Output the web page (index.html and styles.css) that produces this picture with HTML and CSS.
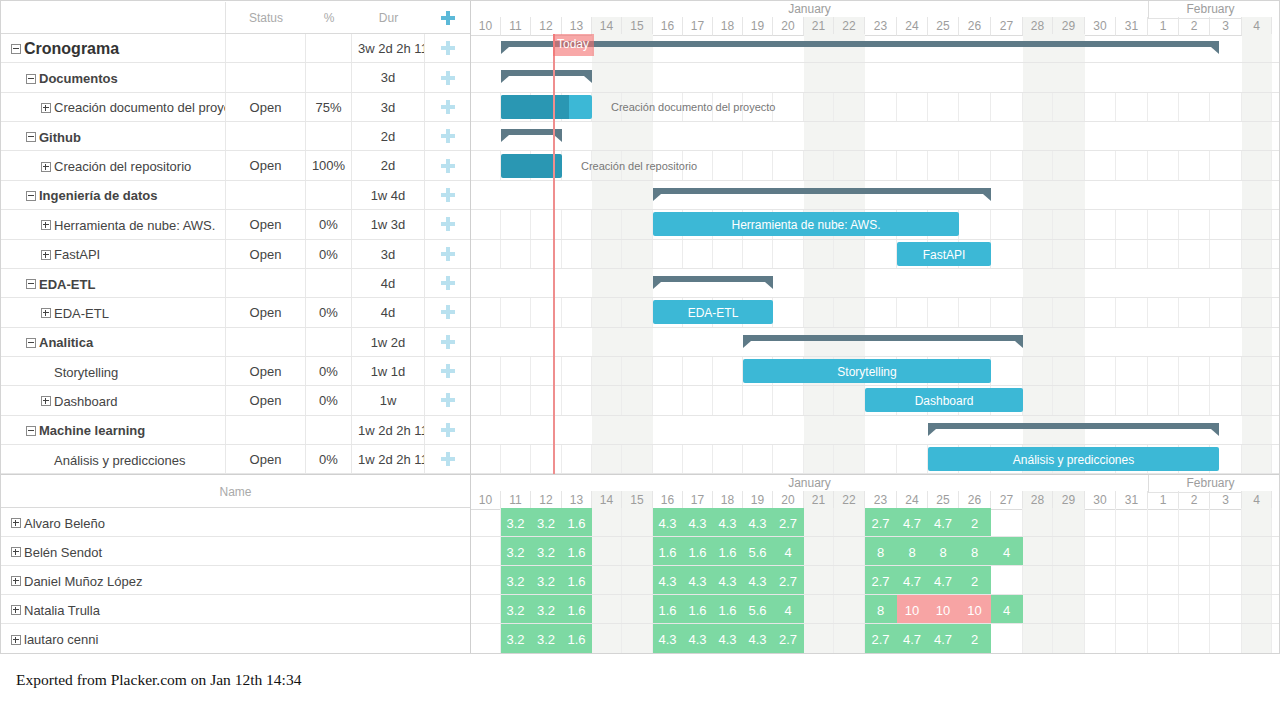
FILE: index.html
```html
<!DOCTYPE html>
<html lang="es">
<head>
  <meta charset="UTF-8">
  <meta name="viewport" content="width=device-width, initial-scale=1.0">
  <title>Cronograma - Placker</title>
  <link rel="stylesheet" href="styles.css">
</head>
<body>
  <div class="planner">
    <!-- Tareas -->
    <div class="section top">
      <div class="side">
        <div class="side-head">
          <div class="blank"></div>
          <div>Status</div>
          <div>%</div>
          <div>Dur</div>
          <div><span class="plus dark"></span></div>
        </div>

        <div class="row project">
          <div class="name"><span class="tog"></span>Cronograma</div>
          <div></div><div></div><div class="dur">3w 2d 2h 11m</div><div class="add"><span class="plus"></span></div>
        </div>
        <div class="row group">
          <div class="name"><span class="tog"></span>Documentos</div>
          <div></div><div></div><div class="dur">3d</div><div class="add"><span class="plus"></span></div>
        </div>
        <div class="row task">
          <div class="name"><span class="tog closed"></span>Creación documento del proyecto</div>
          <div>Open</div><div>75%</div><div class="dur">3d</div><div class="add"><span class="plus"></span></div>
        </div>
        <div class="row group">
          <div class="name"><span class="tog"></span>Github</div>
          <div></div><div></div><div class="dur">2d</div><div class="add"><span class="plus"></span></div>
        </div>
        <div class="row task">
          <div class="name"><span class="tog closed"></span>Creación del repositorio</div>
          <div>Open</div><div>100%</div><div class="dur">2d</div><div class="add"><span class="plus"></span></div>
        </div>
        <div class="row group">
          <div class="name"><span class="tog"></span>Ingeniería de datos</div>
          <div></div><div></div><div class="dur">1w 4d</div><div class="add"><span class="plus"></span></div>
        </div>
        <div class="row task">
          <div class="name"><span class="tog closed"></span>Herramienta de nube: AWS.</div>
          <div>Open</div><div>0%</div><div class="dur">1w 3d</div><div class="add"><span class="plus"></span></div>
        </div>
        <div class="row task">
          <div class="name"><span class="tog closed"></span>FastAPI</div>
          <div>Open</div><div>0%</div><div class="dur">3d</div><div class="add"><span class="plus"></span></div>
        </div>
        <div class="row group">
          <div class="name"><span class="tog"></span>EDA-ETL</div>
          <div></div><div></div><div class="dur">4d</div><div class="add"><span class="plus"></span></div>
        </div>
        <div class="row task">
          <div class="name"><span class="tog closed"></span>EDA-ETL</div>
          <div>Open</div><div>0%</div><div class="dur">4d</div><div class="add"><span class="plus"></span></div>
        </div>
        <div class="row group">
          <div class="name"><span class="tog"></span>Analitica</div>
          <div></div><div></div><div class="dur">1w 2d</div><div class="add"><span class="plus"></span></div>
        </div>
        <div class="row task leaf">
          <div class="name">Storytelling</div>
          <div>Open</div><div>0%</div><div class="dur">1w 1d</div><div class="add"><span class="plus"></span></div>
        </div>
        <div class="row task">
          <div class="name"><span class="tog closed"></span>Dashboard</div>
          <div>Open</div><div>0%</div><div class="dur">1w</div><div class="add"><span class="plus"></span></div>
        </div>
        <div class="row group">
          <div class="name"><span class="tog"></span>Machine learning</div>
          <div></div><div></div><div class="dur">1w 2d 2h 11m</div><div class="add"><span class="plus"></span></div>
        </div>
        <div class="row task leaf">
          <div class="name">Análisis y predicciones</div>
          <div>Open</div><div>0%</div><div class="dur">1w 2d 2h 11m</div><div class="add"><span class="plus"></span></div>
        </div>
      </div>

      <div class="chart">
        <div class="chart-head"></div>
        <div class="chart-body" id="ganttBody">
          <div class="today-line"></div>
          <div class="today-tag">Today</div>
        </div>
      </div>
    </div>

    <!-- Carga de recursos -->
    <div class="section bottom">
      <div class="side">
        <div class="name-head">Name</div>
        <div class="person"><span class="tog closed"></span>Alvaro Beleño</div>
        <div class="person"><span class="tog closed"></span>Belén Sendot</div>
        <div class="person"><span class="tog closed"></span>Daniel Muñoz López</div>
        <div class="person"><span class="tog closed"></span>Natalia Trulla</div>
        <div class="person"><span class="tog closed"></span>lautaro cenni</div>
      </div>
      <div class="chart">
        <div class="chart-head"></div>
        <div class="chart-body" id="loadBody"></div>
      </div>
    </div>
  </div>

  <p class="exported">Exported from Placker.com on Jan 12th 14:34</p>

  <script>
    // Días visibles: 10 de enero al 4 de febrero
    const DAYS = [];
    for (let d = 10; d <= 31; d++) DAYS.push(d);
    for (let d = 1; d <= 4; d++) DAYS.push(d);
    const WEEKEND = [4, 5, 11, 12, 18, 19, 25];

    // from / to son líneas de la grilla (columna 1 = día 10)
    const TASKS = [
      { type: 'summary', from: 2, to: 26, cut: 23 },
      { type: 'summary', from: 2, to: 5 },
      { type: 'task', from: 2, to: 5, pct: 75, label: 'Creación documento del proyecto' },
      { type: 'summary', from: 2, to: 4 },
      { type: 'task', from: 2, to: 4, pct: 100, label: 'Creación del repositorio' },
      { type: 'summary', from: 7, to: 18 },
      { type: 'task', from: 7, to: 17, label: 'Herramienta de nube: AWS.' },
      { type: 'task', from: 15, to: 18, label: 'FastAPI' },
      { type: 'summary', from: 7, to: 11 },
      { type: 'task', from: 7, to: 11, label: 'EDA-ETL' },
      { type: 'summary', from: 10, to: 19 },
      { type: 'task', from: 10, to: 18, label: 'Storytelling' },
      { type: 'task', from: 14, to: 19, label: 'Dashboard' },
      { type: 'summary', from: 16, to: 26, cut: 23 },
      { type: 'task', from: 16, to: 26, cut: 23, label: 'Análisis y predicciones' }
    ];

    const EVEN = { 2: '3.2', 3: '3.2', 4: '1.6', 7: '4.3', 8: '4.3', 9: '4.3', 10: '4.3', 11: '2.7', 14: '2.7', 15: '4.7', 16: '4.7', 17: '2' };
    const FULL = { 2: '3.2', 3: '3.2', 4: '1.6', 7: '1.6', 8: '1.6', 9: '1.6', 10: '5.6', 11: '4', 14: '8', 15: '8', 16: '8', 17: '8', 18: '4' };
    const OVER = Object.assign({}, FULL, { 15: '10', 16: '10', 17: '10' });
    const LOAD = [EVEN, FULL, EVEN, OVER, EVEN];

    function el(tag, cls, text) {
      const node = document.createElement(tag);
      if (cls) node.className = cls;
      if (text !== undefined) node.textContent = text;
      return node;
    }

    function buildHead(head) {
      const months = el('div', 'months');
      months.appendChild(el('div', 'month jan', 'January'));
      months.appendChild(el('div', 'month feb', 'February'));
      const days = el('div', 'days');
      DAYS.forEach((d, i) => {
        days.appendChild(el('div', 'day' + (WEEKEND.includes(i) ? ' weekend' : ''), d));
      });
      head.appendChild(months);
      head.appendChild(days);
    }

    function addCells(row, lines, load) {
      DAYS.forEach((d, i) => {
        let cls = 'cell';
        if (WEEKEND.includes(i)) cls += ' weekend';
        if (lines) cls += ' line';
        const value = load && load[i + 1];
        if (value) cls += parseFloat(value) > 8 ? ' load over' : ' load';
        const cell = el('div', cls, value || undefined);
        cell.style.gridColumn = i + 1;
        row.appendChild(cell);
      });
    }

    function place(node, t) {
      node.style.gridColumn = t.from + ' / ' + t.to;
      if (t.cut) node.style.marginRight = t.cut + 'px';
    }

    function buildGantt() {
      const body = document.getElementById('ganttBody');
      TASKS.forEach(t => {
        const row = el('div', 'c-row');
        addCells(row, t.type === 'task');
        if (t.type === 'summary') {
          const s = el('div', 'summary');
          place(s, t);
          row.appendChild(s);
        } else {
          const bar = el('div', 'bar');
          place(bar, t);
          if (t.pct !== undefined) {
            const done = el('div', 'done');
            done.style.width = t.pct + '%';
            bar.appendChild(done);
            row.appendChild(bar);
            // la etiqueta va fuera de la barra cuando hay progreso
            const out = el('span', 'out', t.label);
            out.style.gridColumn = t.to + ' / -1';
            row.appendChild(out);
          } else {
            bar.textContent = t.label;
            row.appendChild(bar);
          }
        }
        body.appendChild(row);
      });
    }

    function buildLoad() {
      const body = document.getElementById('loadBody');
      LOAD.forEach(load => {
        const row = el('div', 'c-row');
        addCells(row, true, load);
        body.appendChild(row);
      });
    }

    document.querySelectorAll('.chart-head').forEach(buildHead);
    buildGantt();
    buildLoad();
  </script>
</body>
</html>
```

FILE: styles.css
```css
* {
  box-sizing: border-box;
}
body {
  margin: 0;
  font-family: "Liberation Sans", Arial, sans-serif;
  color: #444;
  background: #fff;
}
.planner {
  width: 1280px;
  border: 1px solid #d4d4d4;
}
.section {
  display: flex;
}
.bottom {
  border-top: 1px solid #d0d0d0;
}
.side {
  width: 470px;
  flex: none;
  border-right: 1px solid #cfcfcf;
}
.chart {
  flex: 1;
  --days: 30px 30px 31px 30px 30px 31px 30px 30px 30px 30px 31px 30px 31px 32px 31px 31px 32px 32px 30px 32px 31px 32px 31px 31px 32px 30px;
}

/* columna izquierda */
.side-head {
  display: grid;
  grid-template-columns: 225px 80px 46px 73px 45px;
  height: 33px;
  padding-top: 1px;
  border-bottom: 1px solid #dadada;
  font-size: 12px;
  color: #aaa;
}
.side-head > div {
  display: flex;
  align-items: center;
  justify-content: center;
}
.side-head .blank {
  border-right: 1px solid #e3e3e3;
}
.row {
  display: grid;
  grid-template-columns: 225px 80px 46px 73px 45px;
  height: 29.36px;
  border-bottom: 1px solid #e6e6e6;
  font-size: 13px;
  line-height: 30px;
}
.row > div {
  border-right: 1px solid #e8e8e8;
  text-align: center;
  overflow: hidden;
  white-space: nowrap;
}
.row > div:last-child {
  border-right: 0;
}
.row .name {
  display: flex;
  align-items: center;
  padding-top: 2px;
  line-height: normal;
  text-align: left;
}
.row .dur {
  padding: 0 6px;
}
.row .add {
  display: flex;
  align-items: center;
  justify-content: center;
}
.project .name {
  padding-left: 10px;
  font-size: 16px;
  font-weight: bold;
  color: #333;
}
.group .name {
  padding-left: 25px;
  font-weight: bold;
}
.task .name {
  padding-left: 40px;
}
.task.leaf .name {
  padding-left: 53px;
}
.tog {
  flex: none;
  display: inline-block;
  width: 10px;
  height: 10px;
  margin-right: 3px;
  border: 1px solid #8a8a8a;
  background: linear-gradient(#444, #444) 1px 3px / 6px 1px no-repeat;
}
.tog.closed {
  background:
    linear-gradient(#444, #444) 1px 3px / 6px 1px no-repeat,
    linear-gradient(#444, #444) 3px 1px / 1px 6px no-repeat;
}
.plus {
  display: inline-block;
  width: 14px;
  height: 14px;
  background:
    linear-gradient(#b9e1ef, #b9e1ef) center / 4px 14px no-repeat,
    linear-gradient(#b9e1ef, #b9e1ef) center / 14px 4px no-repeat;
}
.plus.dark {
  background:
    linear-gradient(#5cb9d8, #5cb9d8) center / 4px 14px no-repeat,
    linear-gradient(#5cb9d8, #5cb9d8) center / 14px 4px no-repeat;
}
.name-head {
  height: 33px;
  display: flex;
  align-items: center;
  justify-content: center;
  padding-top: 1px;
  border-bottom: 1px solid #dadada;
  font-size: 12px;
  color: #aaa;
}
.person {
  height: 29px;
  display: flex;
  align-items: center;
  padding: 2px 0 0 10px;
  border-bottom: 1px solid #e6e6e6;
  font-size: 13px;
}
.person:last-child {
  border-bottom: 0;
}

/* cabecera del calendario */
.chart-head {
  height: 33px;
  font-size: 12px;
  color: #9d9d9d;
}
.months,
.days,
.c-row {
  display: grid;
  grid-template-columns: var(--days) 6px;
}
.months {
  height: 16px;
  line-height: 17px;
}
.month {
  text-align: center;
}
.jan {
  grid-column: 1 / 23;
}
.feb {
  grid-column: 23 / 27;
  border-left: 1px solid #ddd;
  border-bottom: 1px solid #e3e3e3;
}
.days {
  height: 17px;
  line-height: 18px;
}
.day {
  text-align: center;
  border-right: 1px solid #e6e6e6;
  border-bottom: 1px solid #dcdcdc;
}
.day.weekend {
  background: #f3f4f2;
  border-bottom-color: transparent;
}

/* filas del gantt */
.chart-body {
  position: relative;
}
.c-row {
  height: 29.36px;
  border-bottom: 1px solid #e6e6e6;
}
.bottom .c-row {
  height: 29px;
}
.bottom .c-row:last-child {
  border-bottom: 0;
}
.cell {
  grid-row: 1;
}
.cell.line {
  border-right: 1px solid #ececec;
}
.cell.weekend {
  background: #f3f4f2;
}
.cell.load {
  display: flex;
  align-items: center;
  justify-content: center;
  padding-top: 2px;
  background: #7dd9a3;
  border-right-color: transparent;
  color: #fff;
  font-size: 13px;
}
.cell.load.over {
  background: #f7a4a4;
}
.bar {
  grid-row: 1;
  align-self: center;
  height: 24px;
  border-radius: 2px;
  background: #3cb8d6;
  color: #fff;
  font-size: 12px;
  line-height: 26px;
  text-align: center;
  white-space: nowrap;
  overflow: hidden;
}
.bar .done {
  height: 100%;
  background: #2a97b3;
}
.out {
  grid-row: 1;
  align-self: center;
  padding: 1px 0 0 19px;
  font-size: 11px;
  color: #777;
  white-space: nowrap;
}
.summary {
  grid-row: 1;
  align-self: start;
  position: relative;
  height: 6px;
  margin-top: 7px;
  background: #5e7a87;
}
.summary::before,
.summary::after {
  content: "";
  position: absolute;
  top: 100%;
  border-top: 7px solid #5e7a87;
}
.summary::before {
  left: 0;
  border-right: 8px solid transparent;
}
.summary::after {
  right: 0;
  border-left: 8px solid transparent;
}

/* marcador de hoy */
.today-line {
  position: absolute;
  top: 0;
  bottom: 0;
  left: 82px;
  width: 2px;
  background: #ef8e8e;
  z-index: 3;
}
.today-tag {
  position: absolute;
  top: 0;
  left: 82px;
  width: 41px;
  height: 22px;
  padding-left: 4px;
  background: rgba(244, 110, 110, 0.6);
  color: #fff;
  font-size: 12px;
  line-height: 20px;
  z-index: 3;
}

.exported {
  margin: 17px 0 0 16px;
  font-family: "Liberation Serif", "Times New Roman", serif;
  font-size: 15.5px;
  color: #111;
}
```
